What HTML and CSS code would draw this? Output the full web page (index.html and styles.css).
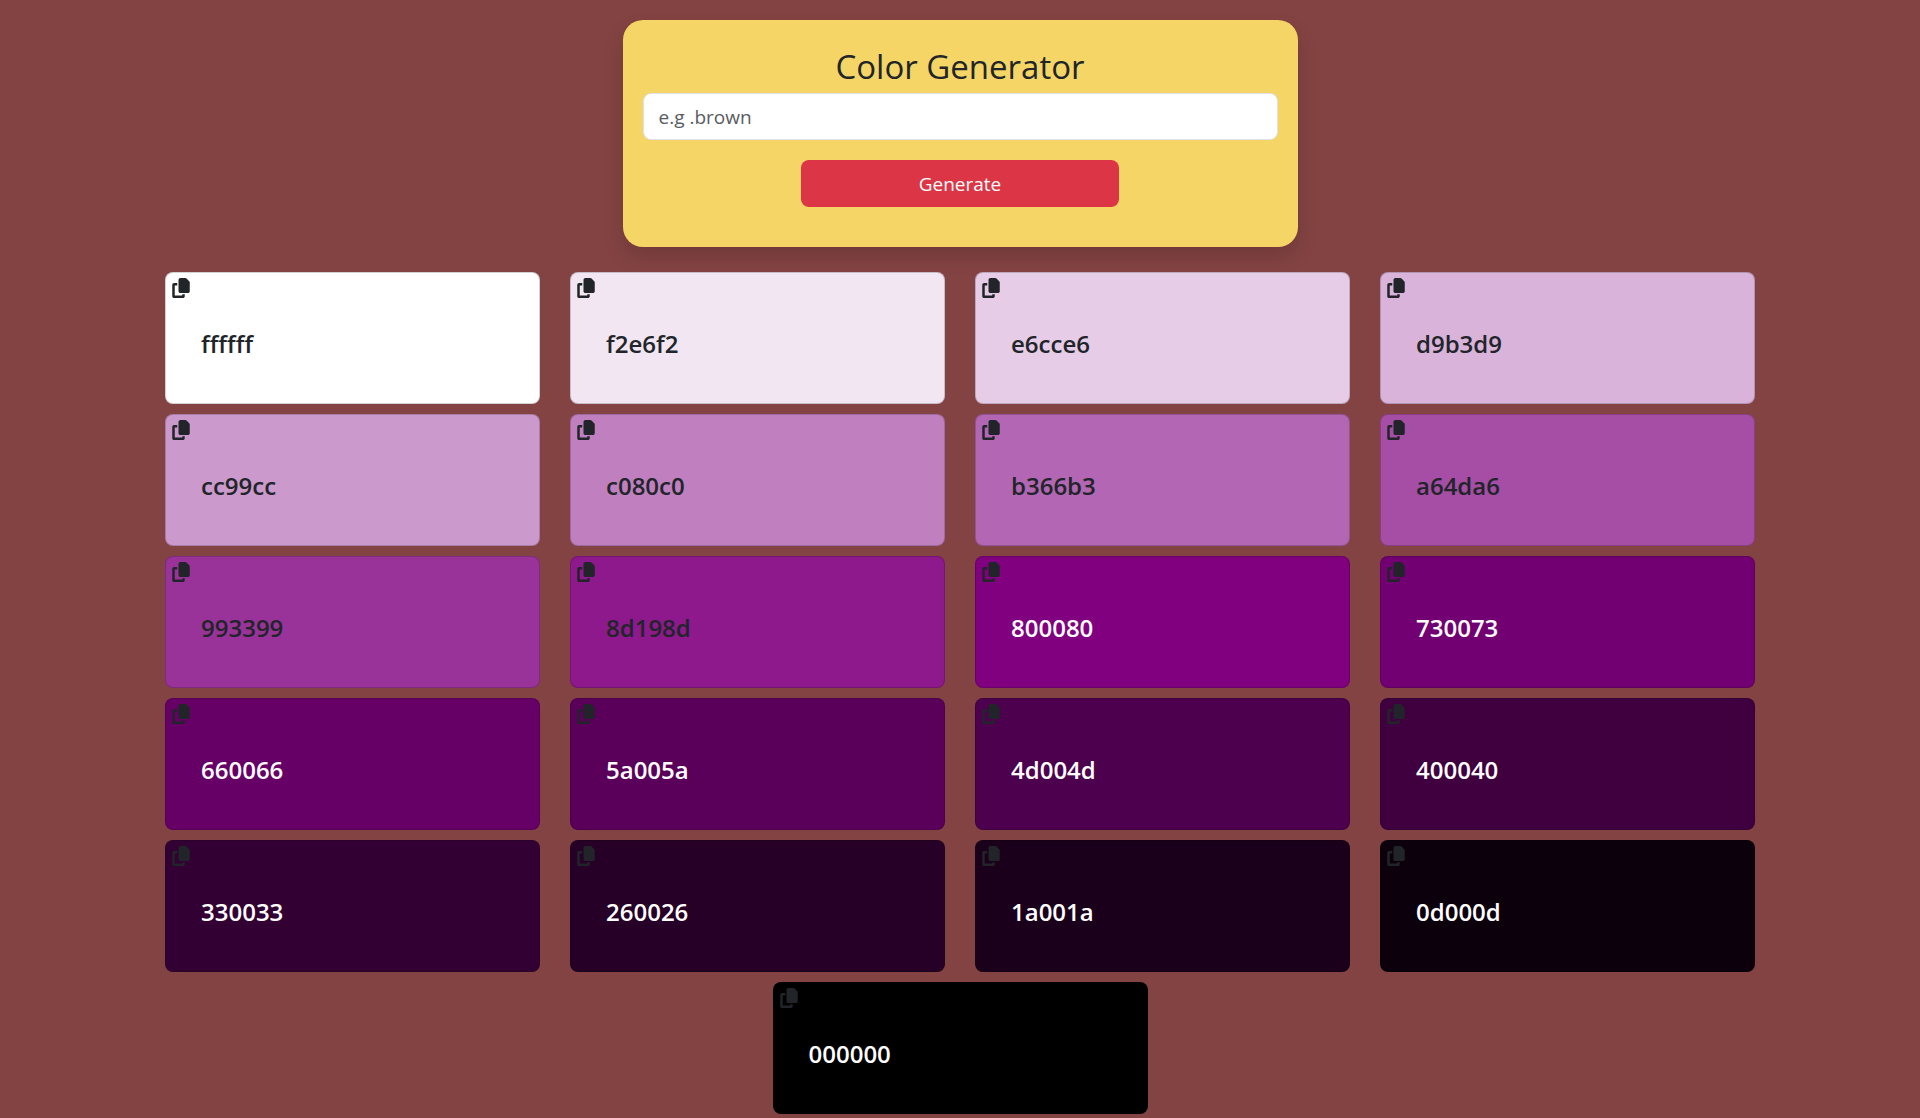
FILE: index.html
```html
<!DOCTYPE html>
<html lang="en">
<head>
<meta charset="utf-8">
<meta name="viewport" content="width=device-width, initial-scale=1">
<title>Color Generator</title>
<link rel="stylesheet" href="styles.css">
</head>
<body>
<svg class="sprite" aria-hidden="true">
  <symbol id="copy" viewBox="0 0 448 512"><path d="M208 0H332.1c12.7 0 24.9 5.1 33.9 14.1l67.9 67.9c9 9 14.1 21.2 14.1 33.9V336c0 26.5-21.5 48-48 48H208c-26.5 0-48-21.5-48-48V48c0-26.5 21.5-48 48-48zM48 128h80v64H64V448H256V416h64v48c0 26.5-21.5 48-48 48H48c-26.5 0-48-21.5-48-48V176c0-26.5 21.5-48 48-48z"/></symbol>
</svg>
<main class="page">
  <form class="generator">
    <h1 class="title"><label for="color">Color Generator</label></h1>
    <input class="field" id="color" type="text" placeholder="e.g .brown">
    <button class="submit" type="button">Generate</button>
  </form>
  <section class="swatches" aria-label="Generated colors">
    <article class="swatch" style="background-color:#ffffff"><button class="copy" type="button" aria-label="Copy"><svg><use href="#copy"/></svg></button><h2 class="code">ffffff</h2></article>
    <article class="swatch" style="background-color:#f2e6f2"><button class="copy" type="button" aria-label="Copy"><svg><use href="#copy"/></svg></button><h2 class="code">f2e6f2</h2></article>
    <article class="swatch" style="background-color:#e6cce6"><button class="copy" type="button" aria-label="Copy"><svg><use href="#copy"/></svg></button><h2 class="code">e6cce6</h2></article>
    <article class="swatch" style="background-color:#d9b3d9"><button class="copy" type="button" aria-label="Copy"><svg><use href="#copy"/></svg></button><h2 class="code">d9b3d9</h2></article>
    <article class="swatch" style="background-color:#cc99cc"><button class="copy" type="button" aria-label="Copy"><svg><use href="#copy"/></svg></button><h2 class="code">cc99cc</h2></article>
    <article class="swatch" style="background-color:#c080c0"><button class="copy" type="button" aria-label="Copy"><svg><use href="#copy"/></svg></button><h2 class="code">c080c0</h2></article>
    <article class="swatch" style="background-color:#b366b3"><button class="copy" type="button" aria-label="Copy"><svg><use href="#copy"/></svg></button><h2 class="code">b366b3</h2></article>
    <article class="swatch" style="background-color:#a64da6"><button class="copy" type="button" aria-label="Copy"><svg><use href="#copy"/></svg></button><h2 class="code">a64da6</h2></article>
    <article class="swatch" style="background-color:#993399"><button class="copy" type="button" aria-label="Copy"><svg><use href="#copy"/></svg></button><h2 class="code">993399</h2></article>
    <article class="swatch" style="background-color:#8d198d"><button class="copy" type="button" aria-label="Copy"><svg><use href="#copy"/></svg></button><h2 class="code">8d198d</h2></article>
    <article class="swatch dark" style="background-color:#800080"><button class="copy" type="button" aria-label="Copy"><svg><use href="#copy"/></svg></button><h2 class="code">800080</h2></article>
    <article class="swatch dark" style="background-color:#730073"><button class="copy" type="button" aria-label="Copy"><svg><use href="#copy"/></svg></button><h2 class="code">730073</h2></article>
    <article class="swatch dark" style="background-color:#660066"><button class="copy" type="button" aria-label="Copy"><svg><use href="#copy"/></svg></button><h2 class="code">660066</h2></article>
    <article class="swatch dark" style="background-color:#5a005a"><button class="copy" type="button" aria-label="Copy"><svg><use href="#copy"/></svg></button><h2 class="code">5a005a</h2></article>
    <article class="swatch dark" style="background-color:#4d004d"><button class="copy" type="button" aria-label="Copy"><svg><use href="#copy"/></svg></button><h2 class="code">4d004d</h2></article>
    <article class="swatch dark" style="background-color:#400040"><button class="copy" type="button" aria-label="Copy"><svg><use href="#copy"/></svg></button><h2 class="code">400040</h2></article>
    <article class="swatch dark" style="background-color:#330033"><button class="copy" type="button" aria-label="Copy"><svg><use href="#copy"/></svg></button><h2 class="code">330033</h2></article>
    <article class="swatch dark" style="background-color:#260026"><button class="copy" type="button" aria-label="Copy"><svg><use href="#copy"/></svg></button><h2 class="code">260026</h2></article>
    <article class="swatch dark" style="background-color:#1a001a"><button class="copy" type="button" aria-label="Copy"><svg><use href="#copy"/></svg></button><h2 class="code">1a001a</h2></article>
    <article class="swatch dark" style="background-color:#0d000d"><button class="copy" type="button" aria-label="Copy"><svg><use href="#copy"/></svg></button><h2 class="code">0d000d</h2></article>
    <article class="swatch dark" style="background-color:#000000"><button class="copy" type="button" aria-label="Copy"><svg><use href="#copy"/></svg></button><h2 class="code">000000</h2></article>
  </section>
</main>
</body>
</html>
```
FILE: styles.css
```css
*, *::before, *::after { box-sizing: border-box; }

body {
  margin: 0;
  background: #844343;
  color: #212529;
  font-family: "Open Sans", "Noto Sans", sans-serif;
  font-size: 19px;
  line-height: 30px;
}

.sprite { display: none; }

.page {
  display: flex;
  flex-direction: column;
  align-items: center;
  gap: 25px;
  max-width: 1630px;
  margin: 0 auto;
  padding: 20px 20px 0;
}

.generator {
  display: flex;
  flex-direction: column;
  align-items: center;
  width: 100%;
  max-width: 675px;
  padding: 21px 20px 40px;
  border-radius: 20px;
  background: #f5d565;
  box-shadow: 0 10px 20px rgba(0, 0, 0, 0.15);
}

.title {
  margin: 0;
  font-size: 33px;
  font-weight: 400;
  line-height: 52px;
}

.field {
  width: 100%;
  height: 47px;
  margin-bottom: 20px;
  padding: 8px 15px;
  border: 1px solid #dee2e6;
  border-radius: 8px;
  background: #fff;
  color: #212529;
  font: inherit;
}

.field::placeholder { color: #595c5f; opacity: 1; }

.submit {
  width: 50%;
  height: 47px;
  padding: 0;
  border: 0;
  border-radius: 8px;
  background: #dc3545;
  color: #fff;
  font: inherit;
  cursor: pointer;
}

.swatches {
  display: flex;
  flex-wrap: wrap;
  justify-content: center;
  gap: 10px 30px;
  width: 100%;
}

.swatch {
  flex: 0 0 calc((100% - 90px) / 4);
  min-width: 200px;
  padding: 5px 6px 42px;
  border: 1px solid rgba(0, 0, 0, 0.175);
  border-radius: 8px;
}

.copy {
  display: block;
  margin: 0;
  padding: 0;
  border: 0;
  background: none;
  color: #212529;
  cursor: pointer;
}

.copy svg {
  display: block;
  width: 18px;
  height: 20px;
  fill: currentColor;
}

.code {
  margin: 0;
  padding: 29px 29px 0;
  font-size: 24px;
  font-weight: 600;
  line-height: 34px;
}

.dark .code { color: #fff; }
```
